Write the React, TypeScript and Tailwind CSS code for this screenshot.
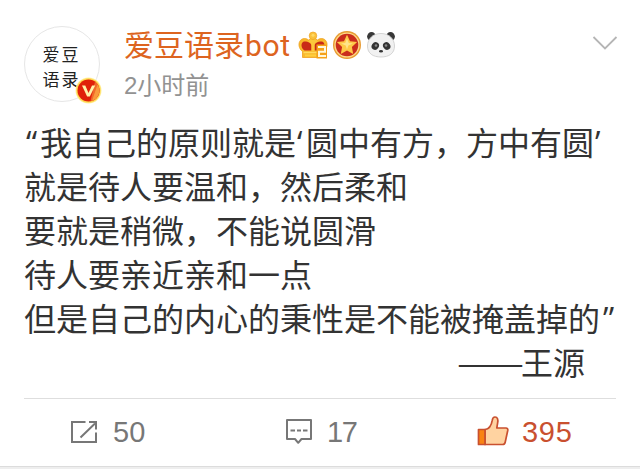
import type { ReactNode } from 'react';

const CJK = "font-['Noto_Sans_CJK_SC',sans-serif]";
const LATIN = "font-['Liberation_Sans','Noto_Sans_CJK_SC',sans-serif]";

function VerifiedBadge() {
  return (
    <svg className="absolute -right-[3px] -bottom-[3px] h-[27px] w-[27px]" viewBox="0 0 27 27">
      <circle cx="13.5" cy="13.5" r="13" fill="#fff0a0" />
      <circle cx="13.5" cy="13.5" r="12.2" fill="#ffd94f" />
      <circle cx="13.5" cy="13.5" r="11" fill="#e02109" />
      <path d="M20 4.600A11 11 0 0 1 15.500 24.300Z" fill="#f0682a" />
      <path d="M22.500 7.500A11 11 0 0 1 17 23.900Z" fill="#f99a3c" />
      <path d="M7 8.500h3.300l3.200 7.500 3.500-7.500h3.200l-5.400 11h-2.700z" fill="#fff3a8" />
    </svg>
  );
}

function Avatar() {
  return (
    <div className="relative flex h-[76px] w-[76px] shrink-0 items-center justify-center rounded-full border border-[#e6e6e6] bg-white">
      <div className={`${CJK} mt-[3px] w-[39px] text-[17px] leading-[25px] tracking-[2px] whitespace-nowrap text-[#222]`}>
        <div>爱豆</div>
        <div>语录</div>
      </div>
      <VerifiedBadge />
    </div>
  );
}

function CrownIcon() {
  return (
    <svg className="h-[30px] w-[30px]" viewBox="0 0 30 30">
      <path d="M4.500 27.500V21.500C.5 18.500 0 13 2.500 10.300c2-2.200 5.500-2.300 8-.3L13 8.500h4l2.500 1.500c2.500-2 6-1.900 8 .3 2.500 2.700 2 8.200-2 11.200v6z" fill="#f9b92c" stroke="#efa01e" strokeWidth=".8" />
      <path d="M6.500 20.500c-3.500-2-3.800-7-1.500-8.500 2.200-1.300 7.700.2 8.300 3v5.500zM23.500 20.500c3.500-2 3.800-7 1.500-8.500-2.200-1.300-7.700.2-8.300 3v5.500z" fill="#c92a17" />
      <path d="M10 11.500c2.500.4 3.700 2 3.700 4.500v5h2.600v-5c0-2.500 1.200-4.100 3.700-4.500l-2.500-2.500h-5z" fill="#fbc83c" />
      <circle cx="15" cy="5.800" r="3.800" fill="#fac13a" stroke="#efa322" strokeWidth=".7" />
      <circle cx="15" cy="5.300" r="1.500" fill="#ffd965" />
      <path d="M5.500 22.500h14" stroke="#ffda62" strokeWidth="1.400" />
      <path d="M7 25.500h11" stroke="#ffcf3f" strokeWidth="2" />
      <path d="M18.500 14.500H29v14H18.500z" fill="#f5a21a" />
      <path d="M20 17h7v4.700h-6V26h7" fill="none" stroke="#fff7dc" strokeWidth="2" />
    </svg>
  );
}

function StarMedalIcon() {
  return (
    <svg className="h-[30px] w-[30px]" viewBox="0 0 30 30">
      <circle cx="15" cy="15" r="14" fill="#e79b32" />
      <circle cx="15" cy="15" r="12.600" fill="#ffd987" />
      <circle cx="15" cy="15" r="11.300" fill="#ca2d1c" />
      <path d="M15 4.700l3 6.500 7.100.9-5.200 4.900 1.300 7-6.200-3.400-6.200 3.400 1.300-7-5.200-4.900 7.100-.9z" fill="#ffc947" />
      <path d="M15 8.500l1.800 4.500 4.200.4-4.700 2.200-1.300 4-1.300-4L9 13.400l4.200-.4z" fill="#ffe58a" />
    </svg>
  );
}

function PandaIcon() {
  return (
    <svg className="h-[30px] w-[30px]" viewBox="0 0 30 30">
      <circle cx="5.500" cy="6.500" r="4.400" fill="#383838" />
      <circle cx="24.500" cy="6.500" r="4.400" fill="#383838" />
      <path d="M15 3.500c8 0 13.500 5.500 13.500 12.500 0 7.500-5.500 11-13.500 11S1.500 23.500 1.500 16C1.500 9 7 3.500 15 3.500z" fill="#f1f1f1" stroke="#cfcfcf" strokeWidth=".9" />
      <ellipse cx="9.300" cy="16" rx="3.500" ry="4" transform="rotate(35 9.300 16)" fill="#333" />
      <ellipse cx="20.700" cy="16" rx="3.500" ry="4" transform="rotate(-35 20.700 16)" fill="#333" />
      <circle cx="10" cy="15.500" r="1.300" fill="#888" />
      <circle cx="20" cy="15.500" r="1.300" fill="#888" />
      <ellipse cx="15" cy="21.300" rx="2" ry="1.200" fill="#333" />
    </svg>
  );
}

function RepostIcon() {
  return (
    <svg className="h-[24px] w-[28px]" viewBox="0 0 28 24" fill="none" stroke="#777" strokeWidth="2">
      <path d="M15.500 2H2v20h24V12.500" />
      <path d="M10.500 17.500L25 3.500M19 2h7v7.500" />
    </svg>
  );
}

function CommentIcon() {
  return (
    <svg className="h-[27px] w-[28px]" viewBox="0 0 28 27" fill="none" stroke="#777" strokeWidth="2">
      <path d="M2 2h24v19h-9.500l-3.300 3.800L10 21H2z" strokeLinejoin="round" />
      <path d="M5.500 12.500h4.500M12 12.500h4M18 12.500h4.500" />
    </svg>
  );
}

function LikeIcon() {
  return (
    <svg className="-mt-px h-[30px] w-[32px]" viewBox="0 0 32 30" stroke="#c9502f" strokeWidth="1.700" strokeLinejoin="round">
      <path d="M8 13.500c3.800-.3 6.500-4.500 7.300-9.300.3-2.200 1.200-3.200 2.700-3.200 2.600 0 3.300 2.800 2.600 6.200l-.8 4.800h9.200c1.400 0 2 1 1.800 2.200l-2.600 12c-.3 1.500-1.200 2.300-2.700 2.300H8z" fill="#ffd3a1" />
      <path d="M1.500 13.500H8v15H1.500z" fill="#f98312" />
    </svg>
  );
}

// Western quotes sit in a narrow slot so the ideographs keep an even pitch.
function Quote({ className, children }: { className: string; children: ReactNode }) {
  return (
    <span className={`inline-block font-['Open_Sans',sans-serif] leading-none ${className}`}>
      {children}
    </span>
  );
}

export default function App() {
  return (
    <div className={`${CJK} flex h-[469px] w-[640px] flex-col overflow-hidden bg-white`}>
      <header className="flex h-[119px] shrink-0 pt-[26px] pl-6">
        <Avatar />
        <div className="ml-6 flex-1">
          <div className="flex h-[38px] items-center">
            <span className="w-[174px] pt-px font-['Roboto','Noto_Sans_CJK_SC',sans-serif] text-[30px] leading-[38px] whitespace-nowrap text-[#dd6420]">
              爱豆语录<span className="ml-px tracking-[0.7px]">bot</span>
            </span>
            <div className="flex gap-1">
              <CrownIcon />
              <StarMedalIcon />
              <PandaIcon />
            </div>
          </div>
          <div className={`${LATIN} pt-[2px] text-[24px] leading-[40px] text-[#929292]`}>
            <span>2</span>小时前
          </div>
        </div>
        <svg className="mt-[9px] mr-[22px] h-4 w-[26px]" viewBox="0 0 26 16" fill="none" stroke="#b5b5b5" strokeWidth="1.800">
          <path d="M1.500 2L13 13.500 24.500 2" />
        </svg>
      </header>

      <main className="h-[279px] shrink-0 pl-6 text-[32px] leading-[44px] whitespace-nowrap text-[#333]">
        <div className="h-[44px]">
          <Quote className="w-4 pl-[2px]">“</Quote>我自己的原则就是<Quote className="w-[10px] pl-px">‘</Quote>圆中有方，方中有圆<Quote className="w-[10px] pl-px">’</Quote>
        </div>
        <div className="h-[44px]">就是待人要温和，然后柔和</div>
        <div className="h-[44px]">要就是稍微，不能说圆滑</div>
        <div className="h-[44px]">待人要亲近亲和一点</div>
        <div className="h-[44px]">
          但是自己的内心的秉性是不能被掩盖掉的<Quote className="w-4 pl-[3px]">”</Quote>
        </div>
        <div className="flex h-[44px] pl-[433px]">
          <span className="w-16 origin-left scale-x-[1.25]">——</span>
          <span>王源</span>
        </div>
      </main>

      <footer className={`${LATIN} mx-6 flex h-[68px] shrink-0 items-center border-t border-[#dedede] pb-[2px] text-[29px] text-[#777]`}>
        <div className="flex w-[261px] items-center gap-[15px] pl-[46px]">
          <RepostIcon />
          <span className="leading-8">50</span>
        </div>
        <div className="flex w-[192px] items-center gap-[14px]">
          <CommentIcon />
          <span className="leading-8 tracking-[-1.5px]">17</span>
        </div>
        <div className="flex items-center gap-[13px] text-[#c9502f]">
          <LikeIcon />
          <span className="leading-8 tracking-[0.7px]">395</span>
        </div>
      </footer>
      <div className="flex-1 border-t border-[#dcdcdc] bg-[#eee]" />
    </div>
  );
}
